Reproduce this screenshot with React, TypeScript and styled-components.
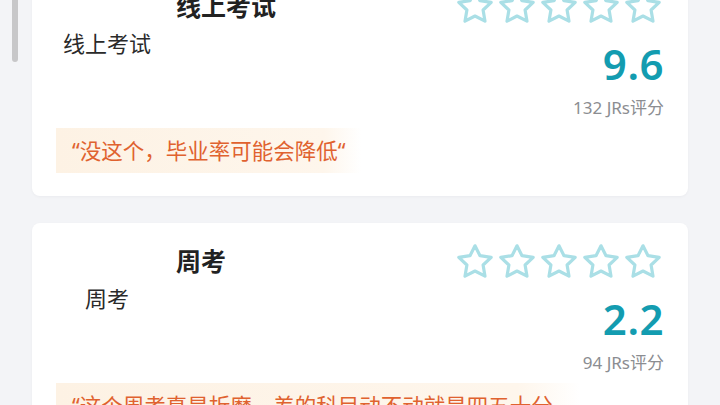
import React from "react";
import styled, { createGlobalStyle } from "styled-components";

const GlobalStyle = createGlobalStyle`
  html, body {
    margin: 0;
    padding: 0;
    background: #f3f4f7;
    overflow: hidden;
  }
  body {
    font-family: "Noto Sans", "Noto Sans CJK SC", sans-serif;
  }
`;

const Page = styled.div`
  width: 720px;
  height: 405px;
  overflow: hidden;
  background: #f3f4f7;
`;

const ScrollThumb = styled.div`
  position: fixed;
  left: 12px;
  top: 0;
  width: 6px;
  height: 62px;
  border-radius: 0 0 3px 3px;
  background: #c7c7c9;
`;

const List = styled.div`
  display: flex;
  flex-direction: column;
  gap: 27px;
  padding: 0 32px;
  margin-top: -32px;
`;

const Card = styled.div`
  box-sizing: border-box;
  height: 228px;
  background: #ffffff;
  border-radius: 8px;
  box-shadow: 0 1px 3px rgba(20, 30, 60, 0.04);
  padding: 0 24px;
  display: flex;
  flex-direction: column;
  align-items: flex-start;
`;

const Top = styled.div`
  display: flex;
  justify-content: space-between;
  align-self: stretch;
`;

const Info = styled.div`
  display: flex;
  flex-direction: column;
  padding-top: 21px;
`;

const Title = styled.div`
  margin-left: 120px;
  font-size: 25px;
  line-height: 34px;
  font-weight: 700;
  color: #222222;
`;

const SubLabel = styled.div`
  width: 102px;
  margin-top: 5px;
  text-align: center;
  font-size: 22px;
  line-height: 30px;
  color: #2a2a2a;
`;

const Rating = styled.div`
  display: flex;
  flex-direction: column;
  align-items: flex-end;
  padding-top: 21px;
`;

const Stars = styled.div`
  display: flex;
  gap: 6px;
  margin-right: 3px;
`;

const StarSvg = styled.svg`
  width: 36px;
  height: 34px;
  display: block;
`;

const Score = styled.div`
  margin-top: 17px;
  font-size: 42px;
  line-height: 48px;
  font-weight: 600;
  color: #139cb0;
  letter-spacing: 0.5px;
`;

const Count = styled.div`
  margin-top: 8px;
  font-size: 17px;
  line-height: 24px;
  color: #8b8d91;
`;

const Quote = styled.div`
  box-sizing: border-box;
  margin-top: 8px;
  max-width: 524px;
  padding: 10px 16px;
  font-size: 21.5px;
  line-height: 25px;
  color: #e0622f;
  background: linear-gradient(
    90deg,
    #fdf2e4 0%,
    #fef6ec 88%,
    rgba(255, 255, 255, 0) 100%
  );
`;

const Star: React.FC = () => (
  <StarSvg viewBox="0 0 36 34">
    <polygon
      points="18,1.8 23,11.7 34.2,13.3 26.1,21 28,32.2 18,27 8,32.2 9.9,21 1.8,13.3 13,11.7"
      fill="none"
      stroke="#aadfe6"
      strokeWidth="3.2"
      strokeLinejoin="round"
    />
  </StarSvg>
);

type Item = {
  title: string;
  sub: string;
  score: string;
  count: number;
  quote: string;
};

const items: Item[] = [
  {
    title: "线上考试",
    sub: "线上考试",
    score: "9.6",
    count: 132,
    quote: "“没这个，毕业率可能会降低“",
  },
  {
    title: "周考",
    sub: "周考",
    score: "2.2",
    count: 94,
    quote: "“这个周考真是折磨，差的科目动不动就是四五十分真的心态都要崩了“",
  },
];

export default function App() {
  return (
    <Page>
      <GlobalStyle />
      <List>
        {items.map((it) => (
          <Card key={it.title}>
            <Top>
              <Info>
                <Title>{it.title}</Title>
                <SubLabel>{it.sub}</SubLabel>
              </Info>
              <Rating>
                <Stars>
                  {[0, 1, 2, 3, 4].map((i) => (
                    <Star key={i} />
                  ))}
                </Stars>
                <Score>{it.score}</Score>
                <Count>{it.count} JRs评分</Count>
              </Rating>
            </Top>
            <Quote>{it.quote}</Quote>
          </Card>
        ))}
      </List>
      <ScrollThumb />
    </Page>
  );
}
